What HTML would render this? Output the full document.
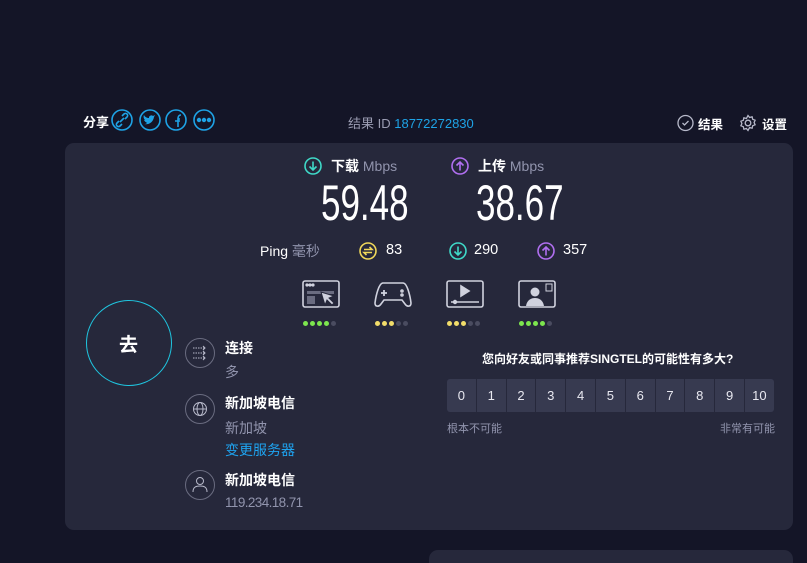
<!DOCTYPE html>
<html><head><meta charset="utf-8"><style>
*{margin:0;padding:0;box-sizing:border-box}
html,body{width:807px;height:563px;overflow:hidden}
body{background:#141527;font-family:"Liberation Sans","Noto Sans CJK SC",sans-serif;color:#fff;position:relative}
.a{position:absolute;white-space:nowrap}
.b{font-weight:bold}
.card{position:absolute;left:65px;top:143px;width:728px;height:387px;background:#26283b;border-radius:9px}
.card2{position:absolute;left:429px;top:550px;width:364px;height:40px;background:#26283b;border-radius:9px}
.num{font-size:50px;transform:scaleX(.7);transform-origin:left top;line-height:50px;color:#fff}
.g{color:#9194ad}
.dots span{display:inline-block;width:5px;height:5px;border-radius:50%;margin-right:2px;background:#4a4c60}
.nps{position:absolute;left:447px;top:379px;display:flex;gap:1px}
.nps div{width:28.8px;height:33px;background:#373a50;color:#e8e8f0;font-size:13px;display:flex;align-items:center;justify-content:center}
.nps div:first-child{border-radius:3px 0 0 3px}.nps div:last-child{border-radius:0 3px 3px 0}
</style></head><body>
<div class="a b" style="left:83px;top:112px;font-size:13px">分享</div>
<svg class="a" style="left:110px;top:108px" width="110" height="26" fill="none" stroke="#1ea3e6" stroke-width="1.6">
<circle cx="12" cy="12" r="10"/><circle cx="40" cy="12" r="10"/><circle cx="66" cy="12" r="10"/><circle cx="94" cy="12" r="10"/>
<path d="M9 13l-2 2a2 2 0 0 0 3 3l2-2M15 11l2-2a2 2 0 0 0-3-3l-2 2M10 14l4-4"/>
<path d="M34 16c4 1 9-1 10-7l1-2-2 1c-1-1-3-1-4 1v1c-2 0-4-1-5-3-1 2 0 4 1 5h-1c1 2 2 2 3 3-1 1-2 1-3 1z" fill="#1ea3e6" stroke="none"/>
<path d="M68 19v-8h2M65 13h5M68 11c0-3 1-4 3-4" />
<circle cx="89" cy="12" r="1.4" fill="#1ea3e6"/><circle cx="94" cy="12" r="1.4" fill="#1ea3e6"/><circle cx="99" cy="12" r="1.4" fill="#1ea3e6"/>
</svg>
<div class="a" style="left:348px;top:113px;font-size:13px;color:#9a9cb2">结果 ID <span style="color:#1ea3e6">18772272830</span></div>
<svg class="a" style="left:677px;top:114px" width="18" height="18" fill="none" stroke="#b8bacb" stroke-width="1.3"><circle cx="8.5" cy="9" r="7.5"/><path d="M5.5 9l2 2 4-4"/></svg>
<div class="a b" style="left:698px;top:114px;font-size:12.5px">结果</div>
<svg class="a" style="left:739px;top:114px" width="19" height="19" fill="none" stroke="#b8bacb" stroke-width="1.3"><circle cx="9" cy="9" r="2.8"/><path d="M9 1.5l1.6 2 2.5-.7.6 2.5 2.4.9-1 2.3 1 2.3-2.4.9-.6 2.5-2.5-.7L9 16.5l-1.6-2-2.5.7-.6-2.5-2.4-.9 1-2.3-1-2.3 2.4-.9.6-2.5 2.5.7z"/></svg>
<div class="a b" style="left:762px;top:114px;font-size:12.5px">设置</div>

<div class="card"></div><div class="card2"></div>

<svg class="a" style="left:304px;top:157px" width="18" height="18" fill="none" stroke="#3fd9c8" stroke-width="1.6"><circle cx="9" cy="9" r="8"/><path d="M9 4.5v8.5M5.5 9.5L9 13l3.5-3.5"/></svg>
<div class="a" style="left:331px;top:156px;font-size:14px"><b>下载</b> <span class="g" style="font-size:14px">Mbps</span></div>
<svg class="a" style="left:451px;top:157px" width="18" height="18" fill="none" stroke="#b06ff0" stroke-width="1.6"><circle cx="9" cy="9" r="8"/><path d="M9 13.5V5M5.5 8.5L9 5l3.5 3.5"/></svg>
<div class="a" style="left:478px;top:156px;font-size:14px"><b>上传</b> <span class="g" style="font-size:14px">Mbps</span></div>
<div class="a num" style="left:321px;top:178px">59.48</div>
<div class="a num" style="left:476px;top:178px">38.67</div>

<div class="a" style="left:260px;top:241px;font-size:14px">Ping <span class="g">毫秒</span></div>
<svg class="a" style="left:359px;top:242px" width="18" height="18" fill="none" stroke="#f0d85a" stroke-width="1.6"><circle cx="9" cy="9" r="8"/><path d="M5 7.5h8l-2.5-2.5M13 10.5H5l2.5 2.5"/></svg>
<div class="a" style="left:386px;top:242px;font-size:14.5px">83</div>
<svg class="a" style="left:449px;top:242px" width="18" height="18" fill="none" stroke="#3fd9c8" stroke-width="1.6"><circle cx="9" cy="9" r="8"/><path d="M9 4.5v8.5M5.5 9.5L9 13l3.5-3.5"/></svg>
<div class="a" style="left:474px;top:242px;font-size:14.5px">290</div>
<svg class="a" style="left:537px;top:242px" width="18" height="18" fill="none" stroke="#b06ff0" stroke-width="1.6"><circle cx="9" cy="9" r="8"/><path d="M9 13.5V5M5.5 8.5L9 5l3.5 3.5"/></svg>
<div class="a" style="left:563px;top:242px;font-size:14.5px">357</div>

<svg class="a" style="left:300px;top:279px" width="260" height="32" fill="none" stroke="#d0d2de" stroke-width="1.6">
<rect x="3" y="2" width="36" height="26" rx="2"/><rect x="7" y="12" width="27" height="3" fill="#6a6c80" stroke="none"/><rect x="7" y="17" width="8" height="8" fill="#6a6c80" stroke="none"/>
<circle cx="7" cy="6" r=".8" fill="#d0d2de"/><circle cx="10" cy="6" r=".8" fill="#d0d2de"/><circle cx="13" cy="6" r=".8" fill="#d0d2de"/>
<path d="M21 13l4 13 2-5 5 5 2-2-5-5 5-2z" fill="#d0d2de" stroke="#26283b" stroke-width="1"/>
<path d="M83 4h20c4 0 7 12 8 20 0 4-4 4-6 1l-3-4H84l-3 4c-2 3-6 3-6-1 1-8 4-20 8-20z"/>
<path d="M84 11v6M81 14h6" stroke-width="1.8"/><circle cx="102" cy="12" r="1" /><circle cx="102" cy="16" r="1"/>
<rect x="147" y="2" width="36" height="26" rx="2"/><path d="M161 7v10l8-5z" fill="#d0d2de"/><path d="M151 23h28"/><circle cx="155" cy="23" r="1.4" fill="#d0d2de"/>
<rect x="219" y="2" width="36" height="26" rx="2"/><circle cx="235" cy="13" r="4.5" fill="#d0d2de" stroke="none"/><path d="M226 27c1-6 5-8 9-8s8 2 9 8z" fill="#d0d2de" stroke="none"/><rect x="246" y="5" width="6" height="7" stroke-width="1"/>
</svg>
<div class="a dots" style="left:303px;top:313px"><span style="background:#7de64e"></span><span style="background:#7de64e"></span><span style="background:#7de64e"></span><span style="background:#7de64e"></span><span></span></div>
<div class="a dots" style="left:375px;top:313px"><span style="background:#f2dd6a"></span><span style="background:#f2dd6a"></span><span style="background:#f2dd6a"></span><span></span><span></span></div>
<div class="a dots" style="left:447px;top:313px"><span style="background:#f2dd6a"></span><span style="background:#f2dd6a"></span><span style="background:#f2dd6a"></span><span></span><span></span></div>
<div class="a dots" style="left:519px;top:313px"><span style="background:#7de64e"></span><span style="background:#7de64e"></span><span style="background:#7de64e"></span><span style="background:#7de64e"></span><span></span></div>

<div class="a" style="left:86px;top:300px;width:86px;height:86px;border-radius:50%;border:1px solid #1fc6e0"></div>
<div class="a b" style="left:119px;top:330px;font-size:19px">去</div>

<svg class="a" style="left:184px;top:337px" width="32" height="166" fill="none" stroke="#6a6c80" stroke-width="1">
<circle cx="16" cy="16" r="14.5"/><circle cx="16" cy="72" r="14.5"/><circle cx="16" cy="148" r="14.5"/>
<path d="M9 11h12M9 16h12M9 21h12" stroke="#b8bacb" stroke-dasharray="1.5 1"/><path d="M19 9l2 2-2 2M19 14l2 2-2 2M19 19l2 2-2 2" stroke="#b8bacb"/>
<g stroke="#b8bacb"><circle cx="16" cy="72" r="6.5"/><ellipse cx="16" cy="72" rx="3" ry="6.5"/><path d="M9.5 72h13"/></g>
<g stroke="#b8bacb"><circle cx="16" cy="144" r="3.5"/><path d="M9 155c0-5 3-6 7-6s7 1 7 6"/></g>
</svg>
<div class="a b" style="left:225px;top:338px;font-size:14px">连接</div>
<div class="a g" style="left:225px;top:362px;font-size:14px">多</div>
<div class="a b" style="left:225px;top:393px;font-size:14px">新加坡电信</div>
<div class="a g" style="left:225px;top:418px;font-size:14px">新加坡</div>
<div class="a" style="left:225px;top:440px;font-size:14px;color:#1ea3f0">变更服务器</div>
<div class="a b" style="left:225px;top:470px;font-size:14px">新加坡电信</div>
<div class="a g" style="left:225px;top:495px;font-size:13.5px;letter-spacing:-0.6px">119.234.18.71</div>

<div class="a b" style="left:482px;top:350px;font-size:12px">您向好友或同事推荐SINGTEL的可能性有多大?</div>
<div class="nps"><div>0</div><div>1</div><div>2</div><div>3</div><div>4</div><div>5</div><div>6</div><div>7</div><div>8</div><div>9</div><div>10</div></div>
<div class="a g" style="left:447px;top:420px;font-size:11px">根本不可能</div>
<div class="a g" style="left:720px;top:420px;font-size:11px">非常有可能</div>
</body></html>
